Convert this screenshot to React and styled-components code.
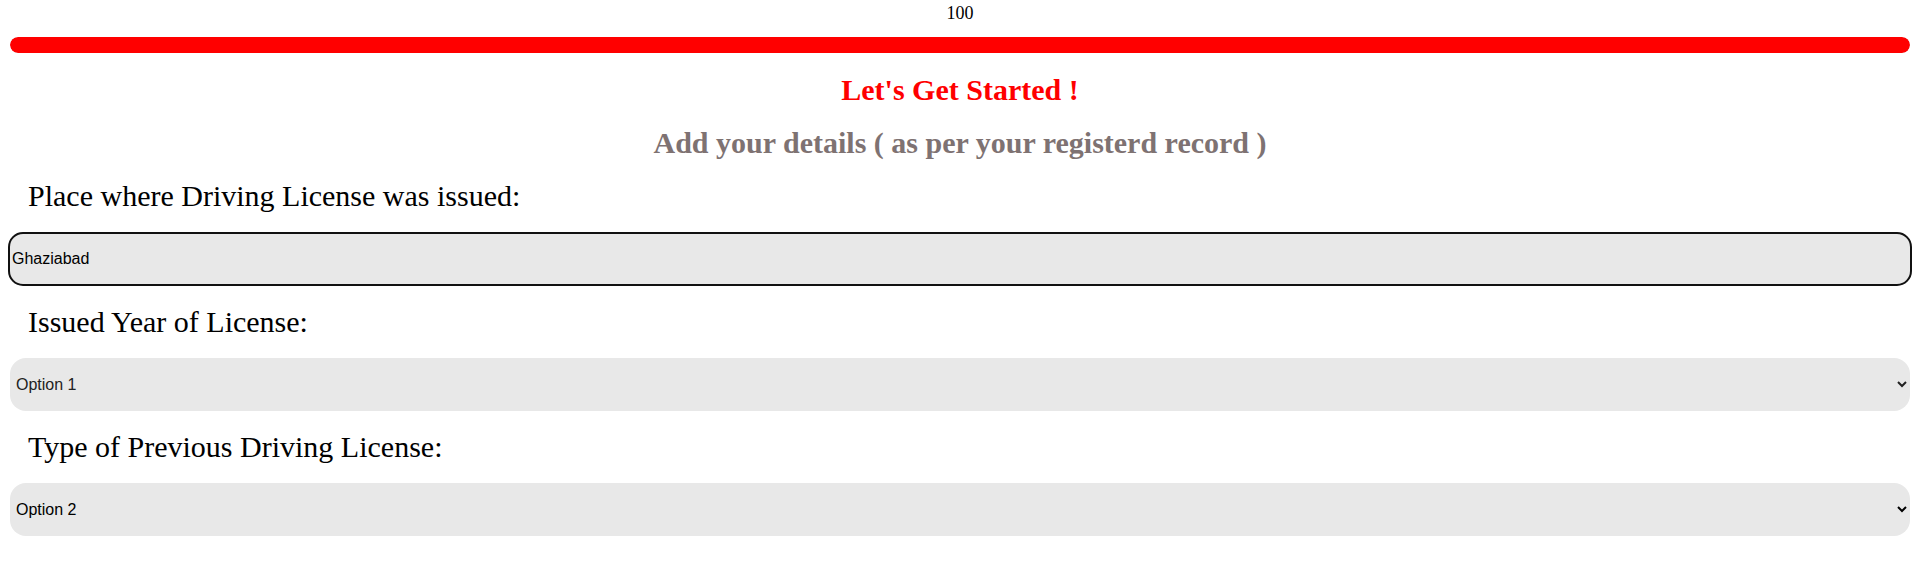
import React from "react";
import styled, { createGlobalStyle } from "styled-components";

const GlobalStyle = createGlobalStyle`
  body {
    margin: 0;
    background: #fff;
    font-family: "Liberation Serif", "Times New Roman", serif;
  }
`;

const Page = styled.div`
  padding: 0 8px;
  display: flex;
  flex-direction: column;
`;

const ProgressValue = styled.div`
  margin-top: 3px;
  text-align: center;
  font-size: 18px;
  line-height: 20px;
  color: #000;
`;

const ProgressTrack = styled.div`
  margin: 14px 2px 0;
  height: 16px;
  border-radius: 8px;
  background: #e6e6e6;
  overflow: hidden;
`;

const ProgressFill = styled.div`
  height: 100%;
  border-radius: 8px;
  background: #ff0000;
`;

const Form = styled.form`
  margin-top: 20px;
  display: flex;
  flex-direction: column;
  gap: 19px;
`;

const Heading = styled.h2`
  margin: 0;
  text-align: center;
  font-size: 30px;
  line-height: 34px;
  font-weight: bold;
  color: ${(p) => p.$color};
`;

const Label = styled.label`
  padding-left: 20px;
  font-size: 30px;
  line-height: 34px;
  color: #000;
`;

const TextInput = styled.input`
  box-sizing: border-box;
  width: 100%;
  height: 54px;
  margin: 0;
  padding: 1px 2px;
  border: 2px solid #111;
  border-radius: 15px;
  background: #e8e8e8;
  font-family: "Liberation Sans", Arial, sans-serif;
  font-size: 16px;
  color: #000;
  outline: none;
`;

const Select = styled.select`
  box-sizing: border-box;
  width: calc(100% - 4px);
  height: 53px;
  margin: 0 2px;
  padding: 0 2px;
  border: none;
  border-radius: 16px;
  background: #e8e8e8;
  font-family: "Liberation Sans", Arial, sans-serif;
  font-size: 16px;
  color: ${(p) => (p.$muted ? "#222" : "#000")};
  outline: none;
`;

export default function App() {
  const progress = 100;
  return (
    <>
      <GlobalStyle />
      <Page>
        <ProgressValue>{progress}</ProgressValue>
        <ProgressTrack>
          <ProgressFill style={{ width: `${progress}%` }} />
        </ProgressTrack>
        <Form onSubmit={(e) => e.preventDefault()}>
          <Heading $color="#ff0000">Let's Get Started !</Heading>
          <Heading $color="#7e7272">Add your details ( as per your registerd record )</Heading>
          <Label htmlFor="place">Place where Driving License was issued:</Label>
          <TextInput id="place" type="text" defaultValue="Ghaziabad" />
          <Label htmlFor="year">Issued Year of License:</Label>
          <Select id="year" defaultValue="Option 1" $muted>
            <option>Option 1</option>
            <option>Option 2</option>
            <option>Option 3</option>
          </Select>
          <Label htmlFor="type">Type of Previous Driving License:</Label>
          <Select id="type" defaultValue="Option 2">
            <option>Option 1</option>
            <option>Option 2</option>
            <option>Option 3</option>
          </Select>
        </Form>
      </Page>
    </>
  );
}
